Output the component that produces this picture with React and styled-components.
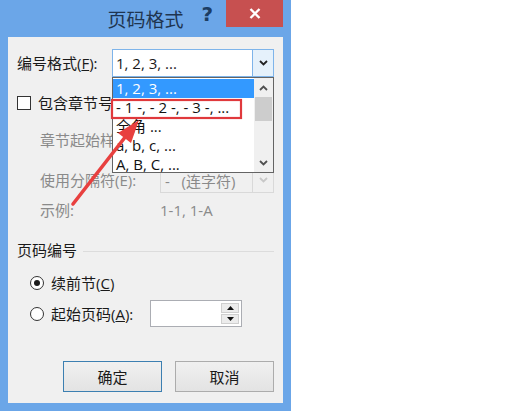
import styled, { createGlobalStyle } from 'styled-components';

const GlobalStyle = createGlobalStyle`
  body {
    margin: 0;
    background: #ffffff;
    font-family: 'Open Sans', 'Noto Sans CJK SC', sans-serif;
  }
`;

const Page = styled.div`
  width: 507px;
  height: 418px;
  background: #ffffff;
  overflow: hidden;
`;

const Dialog = styled.div`
  position: relative;
  width: 291px;
  height: 411px;
  box-sizing: border-box;
  padding: 0 8px 8px;
  background: #6ba6e8;
  display: flex;
  flex-direction: column;
`;

const TitleBar = styled.div`
  height: 37px;
  flex-shrink: 0;
  display: grid;
  grid-template-columns: 1fr auto 1fr;
  align-items: start;
`;

const Title = styled.div`
  grid-column: 2;
  margin-top: 7px;
  font-family: 'Noto Sans CJK SC', sans-serif;
  font-size: 19px;
  line-height: 24px;
  color: #1f3550;
`;

const TitleControls = styled.div`
  grid-column: 3;
  display: flex;
  justify-content: flex-end;
  align-items: flex-start;
  gap: 13px;
`;

const Help = styled.span`
  margin-top: 3px;
  font-family: 'DejaVu Sans', sans-serif;
  font-weight: 700;
  font-size: 20px;
  line-height: 22px;
  color: #1c3d63;
`;

const CloseButton = styled.div`
  width: 57px;
  height: 27px;
  background: #c75050;
  display: flex;
  align-items: center;
  justify-content: center;
`;

const Content = styled.div`
  flex: 1;
  background: #f0f0f0;
  padding: 0 9px;
  display: flex;
  flex-direction: column;
  font-size: 15px;
  color: #1a1a1a;
`;

const Row = styled.div`
  display: flex;
  align-items: center;
  flex-shrink: 0;
  height: ${p => p.$h}px;
  margin-top: ${p => p.$mt}px;
  padding-left: ${p => p.$indent || 0}px;
  color: ${p => (p.$disabled ? '#8a8a8a' : '#1a1a1a')};
`;

const Label = styled.span`
  width: ${p => (p.$w ? `${p.$w}px` : 'auto')};
  flex-shrink: 0;
  white-space: nowrap;
  line-height: 20px;
`;

const SelectWrap = styled.div`
  position: relative;
  width: ${p => p.$w}px;
  height: 100%;
`;

const SelectBox = styled.div`
  height: 100%;
  box-sizing: border-box;
  display: flex;
  background: ${p => (p.$disabled ? '#f0f0f0' : '#ffffff')};
  border: 1px solid ${p => (p.$disabled ? '#d9d9d9' : '#7eb4ea')};
`;

const SelectValue = styled.div`
  flex: 1;
  display: flex;
  align-items: center;
  padding-left: ${p => p.$pl || 3}px;
  white-space: pre;
  color: ${p => (p.$disabled ? '#8a8a8a' : '#1a1a1a')};
`;

const SelectArrow = styled.div`
  width: 20px;
  display: flex;
  align-items: center;
  justify-content: center;
  background: ${p => (p.$disabled ? '#f0f0f0' : '#e5f1fb')};
  border-left: 1px solid ${p => (p.$disabled ? '#d9d9d9' : '#7eb4ea')};
`;

const DropList = styled.div`
  position: absolute;
  top: 100%;
  left: 0;
  width: 100%;
  height: 96px;
  box-sizing: border-box;
  border: 1px solid #646464;
  background: #ffffff;
  display: flex;
  z-index: 2;
`;

const Items = styled.div`
  flex: 1;
  padding-top: 1px;
  overflow: hidden;
`;

const Item = styled.div`
  height: 19px;
  line-height: 19px;
  padding-left: 3px;
  white-space: pre;
  background: ${p => (p.$active ? '#3399ff' : 'transparent')};
  color: ${p => (p.$active ? '#ffffff' : '#111111')};
`;

const ScrollBar = styled.div`
  width: 19px;
  background: #f0f0f0;
  display: flex;
  flex-direction: column;
  align-items: center;
`;

const ScrollBtn = styled.div`
  height: 19px;
  width: 100%;
  display: flex;
  align-items: center;
  justify-content: center;
`;

const Thumb = styled.div`
  width: 17px;
  height: 24px;
  background: #cdcdcd;
`;

const Spacer = styled.div`
  flex: 1;
`;

const CheckBox = styled.span`
  width: 14px;
  height: 14px;
  box-sizing: border-box;
  border: 1px solid #333333;
  background: #ffffff;
  margin-right: 7px;
  flex-shrink: 0;
`;

const GroupHeader = styled.div`
  display: flex;
  align-items: center;
  height: 20px;
  margin-top: 20px;
  flex-shrink: 0;
  line-height: 20px;
`;

const GroupLine = styled.div`
  flex: 1;
  height: 1px;
  margin-left: 6px;
  margin-top: 2px;
  background: #dcdcdc;
`;

const Radio = styled.span`
  width: 14px;
  height: 14px;
  box-sizing: border-box;
  border-radius: 50%;
  border: 1px solid #333333;
  background: #ffffff;
  margin-right: 7px;
  flex-shrink: 0;
  display: flex;
  align-items: center;
  justify-content: center;

  &::after {
    content: '';
    width: 6px;
    height: 6px;
    border-radius: 50%;
    background: ${p => (p.$checked ? '#1a1a1a' : 'transparent')};
  }
`;

const SpinBox = styled.div`
  width: 92px;
  height: 100%;
  box-sizing: border-box;
  border: 1px solid #abadb3;
  background: #ffffff;
  display: flex;
  justify-content: flex-end;
  padding: 2px 2px 2px 0;
`;

const SpinButtons = styled.div`
  width: 18px;
  display: flex;
  flex-direction: column;
  gap: 1px;
`;

const SpinBtn = styled.div`
  flex: 1;
  background: #ececec;
  border: 1px solid #cfcfcf;
  display: flex;
  align-items: center;
  justify-content: center;
`;

const ButtonRow = styled.div`
  display: flex;
  justify-content: flex-end;
  gap: 13px;
  margin-top: 34px;
  height: 31px;
  flex-shrink: 0;
`;

const Button = styled.div`
  width: 99px;
  box-sizing: border-box;
  display: flex;
  align-items: center;
  justify-content: center;
  font-family: 'Noto Sans CJK SC', sans-serif;
  background: linear-gradient(#f0f0f0, #e3e3e3);
  border: 1px solid ${p => (p.$primary ? '#3c7fb1' : '#acacac')};
  color: #1a1a1a;
`;

const Annotation = styled.svg`
  position: absolute;
  left: 0;
  top: 0;
  pointer-events: none;
  z-index: 5;
`;

const Chevron = ({ down = true, color = '#222', w = 9 }) => (
  <svg width={w} height="6" viewBox="0 0 9 6">
    <path
      d={down ? 'M1 1 L4.5 4.5 L8 1' : 'M1 5 L4.5 1.5 L8 5'}
      fill="none"
      stroke={color}
      strokeWidth="1.8"
    />
  </svg>
);

const Triangle = ({ up }) => (
  <svg width="7" height="4" viewBox="0 0 7 4">
    <path d={up ? 'M0 4 L3.5 0 L7 4 Z' : 'M0 0 L3.5 4 L7 0 Z'} fill="#111" />
  </svg>
);

const formats = ['1, 2, 3, ...', '- 1 -, - 2 -, - 3 -, ...', '全角 ...', 'a, b, c, ...', 'A, B, C, ...'];

export default function App() {
  return (
    <Page>
      <GlobalStyle />
      <Dialog>
        <TitleBar>
          <Title>页码格式</Title>
          <TitleControls>
            <Help>?</Help>
            <CloseButton>
              <svg width="12" height="11" viewBox="0 0 12 11">
                <path d="M1.5 1 L10.5 10 M10.5 1 L1.5 10" stroke="#fff" strokeWidth="2.4" />
              </svg>
            </CloseButton>
          </TitleControls>
        </TitleBar>

        <Content>
          <Row $h={28} $mt={12}>
            <Label $w={95}>
              编号格式(<u>F</u>):
            </Label>
            <SelectWrap $w={162}>
              <SelectBox>
                <SelectValue>1, 2, 3, ...</SelectValue>
                <SelectArrow>
                  <Chevron />
                </SelectArrow>
              </SelectBox>
              <DropList>
                <Items>
                  {formats.map((f, i) => (
                    <Item key={f} $active={i === 0}>
                      {f}
                    </Item>
                  ))}
                </Items>
                <ScrollBar>
                  <ScrollBtn>
                    <Chevron down={false} color="#505050" />
                  </ScrollBtn>
                  <Thumb />
                  <Spacer />
                  <ScrollBtn>
                    <Chevron color="#505050" />
                  </ScrollBtn>
                </ScrollBar>
              </DropList>
            </SelectWrap>
          </Row>

          <Row $h={28} $mt={12}>
            <CheckBox />
            <Label>包含章节号(N)</Label>
          </Row>

          <Row $h={26} $mt={10} $indent={23} $disabled>
            <Label $w={120}>章节起始样式(P):</Label>
            <SelectWrap $w={114}>
              <SelectBox $disabled>
                <SelectValue $disabled>标题 1</SelectValue>
                <SelectArrow $disabled>
                  <Chevron color="#c8c8c8" />
                </SelectArrow>
              </SelectBox>
            </SelectWrap>
          </Row>

          <Row $h={26} $mt={14} $indent={23} $disabled>
            <Label $w={120}>使用分隔符(E):</Label>
            <SelectWrap $w={114}>
              <SelectBox $disabled>
                <SelectValue $disabled $pl={4}>
                  {'-   (连字符)'}
                </SelectValue>
                <SelectArrow $disabled>
                  <Chevron color="#c8c8c8" />
                </SelectArrow>
              </SelectBox>
            </SelectWrap>
          </Row>

          <Row $h={20} $mt={7} $indent={23} $disabled>
            <Label $w={120}>示例:</Label>
            <Label>1-1, 1-A</Label>
          </Row>

          <GroupHeader>
            <span>页码编号</span>
            <GroupLine />
          </GroupHeader>

          <Row $h={20} $mt={13} $indent={13}>
            <Radio $checked />
            <Label>
              续前节(<u>C</u>)
            </Label>
          </Row>

          <Row $h={27} $mt={7} $indent={13}>
            <Radio />
            <Label $w={99}>
              起始页码(<u>A</u>):
            </Label>
            <SpinBox>
              <SpinButtons>
                <SpinBtn>
                  <Triangle up />
                </SpinBtn>
                <SpinBtn>
                  <Triangle />
                </SpinBtn>
              </SpinButtons>
            </SpinBox>
          </Row>

          <ButtonRow>
            <Button $primary>确定</Button>
            <Button>取消</Button>
          </ButtonRow>
        </Content>

        <Annotation width="291" height="411" viewBox="0 0 291 411">
          <rect x="112" y="100" width="129" height="18" fill="none" stroke="#e0393c" strokeWidth="2.2" />
          <path d="M73 204 L126 136" stroke="#e8403f" strokeWidth="3.6" strokeLinecap="round" />
          <path d="M139 120 L131 143 L118 133 Z" fill="#e8403f" />
        </Annotation>
      </Dialog>
    </Page>
  );
}
